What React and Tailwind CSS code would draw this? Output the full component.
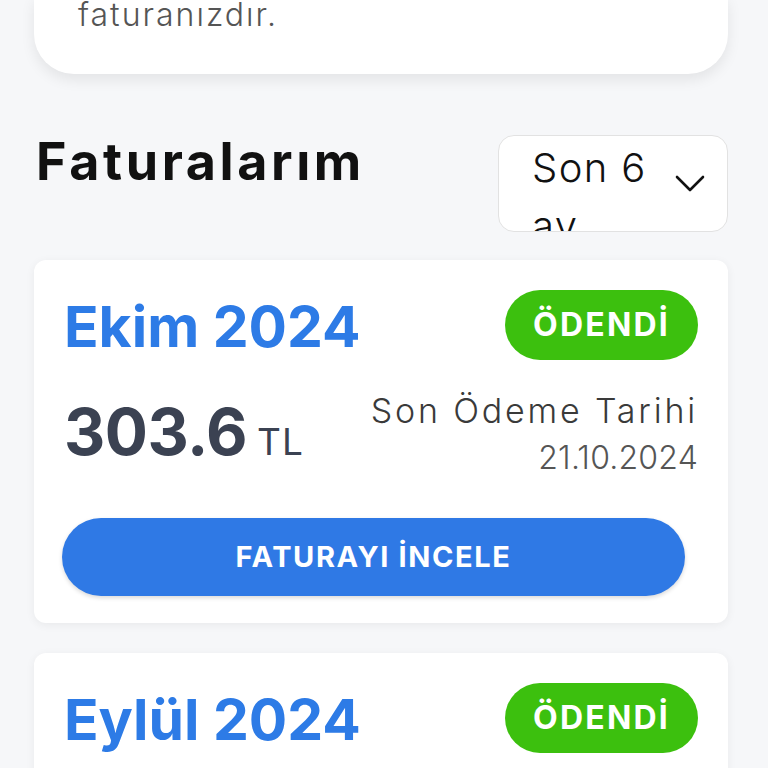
import React from 'react';

const invoices = [
  { month: 'Ekim 2024', amount: '303.6', due: '21.10.2024', status: 'ÖDENDİ' },
  { month: 'Eylül 2024', amount: '287.4', due: '21.09.2024', status: 'ÖDENDİ' },
];

const ChevronDown = () => (
  <svg width="30" height="18" viewBox="0 0 30 18" fill="none" stroke="#111" strokeWidth="2.6" strokeLinecap="round" strokeLinejoin="round">
    <path d="M2 2l13 13L28 2" />
  </svg>
);

const InvoiceCard = ({ invoice }) => (
  <div className="bg-white rounded-[12px] shadow-[0_2px_10px_rgba(0,0,0,0.06)] pl-[30px] pr-[30px] pt-[28px] pb-[27px]">
    {/* Title + status */}
    <div className="flex items-center justify-between">
      <h3 className="text-[57px] leading-[70px] font-bold text-[#2d7be6] mt-[4px]">{invoice.month}</h3>
      <span className="h-[70px] px-[28px] rounded-full bg-[#3cc00e] text-white text-[32px] font-bold flex items-center tracking-[2.2px]">
        {invoice.status}
      </span>
    </div>

    {/* Amount + due date */}
    <div className="flex items-start justify-between mt-[22px]">
      <div className="flex items-baseline mt-[16px]">
        <span className="text-[64px] leading-[64px] font-bold text-[#3b4252] tracking-[-0.5px]">{invoice.amount}</span>
        <span className="text-[37px] text-[#3b4252] ml-[10px] tracking-[1px]">TL</span>
      </div>
      <div className="text-right mt-[5px]">
        <div className="text-[34px] leading-[44px] font-light text-[#3a3a3a] tracking-[2.8px]">Son Ödeme Tarihi</div>
        <div className="text-[32px] leading-[50px] font-light text-[#555] tracking-[0.2px]">{invoice.due}</div>
      </div>
    </div>

    {/* Action */}
    <button className="mt-[35px] ml-[-2px] w-[623px] h-[78px] rounded-full bg-[#2f79e5] text-white text-[29px] font-bold tracking-[1.6px] shadow-[0_2px_4px_rgba(0,0,0,0.15)]">
      FATURAYI İNCELE
    </button>
  </div>
);

export default function App() {
  return (
    <div
      className="min-h-[768px] bg-[#f6f7f9] pl-[34px] pr-[40px] pb-[40px] overflow-hidden"
      style={{ fontFamily: 'Inter, "Noto Sans", sans-serif' }}
    >
      {/* Info card (scrolled partly off screen) */}
      <div className="bg-white rounded-b-[40px] shadow-[0_6px_14px_rgba(0,0,0,0.08)] px-[44px] pb-[40px] -mt-[4px]">
        <p className="text-[32px] leading-[38px] font-light text-[#555] tracking-[2px]">faturanızdır.</p>
      </div>

      {/* Header */}
      <div className="flex items-start justify-between mt-[61px]">
        <h2 className="text-[52px] leading-[60px] font-bold text-[#111] -mt-[3px] ml-[2px] tracking-[3.6px]">Faturalarım</h2>
        <div className="w-[230px] h-[97px] rounded-[16px] border border-[#e2e2e2] bg-white pl-[33px] pr-[22px] pt-[3px] flex items-start overflow-hidden">
          <span className="text-[40px] leading-[58px] font-light text-[#111] w-[120px] tracking-[1.4px]">Son 6 ay</span>
          <span className="mt-[36px] ml-auto"><ChevronDown /></span>
        </div>
      </div>

      {/* Invoice list */}
      <div className="mt-[28px] flex flex-col gap-[30px]">
        {invoices.map((inv) => (
          <InvoiceCard key={inv.month} invoice={inv} />
        ))}
      </div>
    </div>
  );
}
